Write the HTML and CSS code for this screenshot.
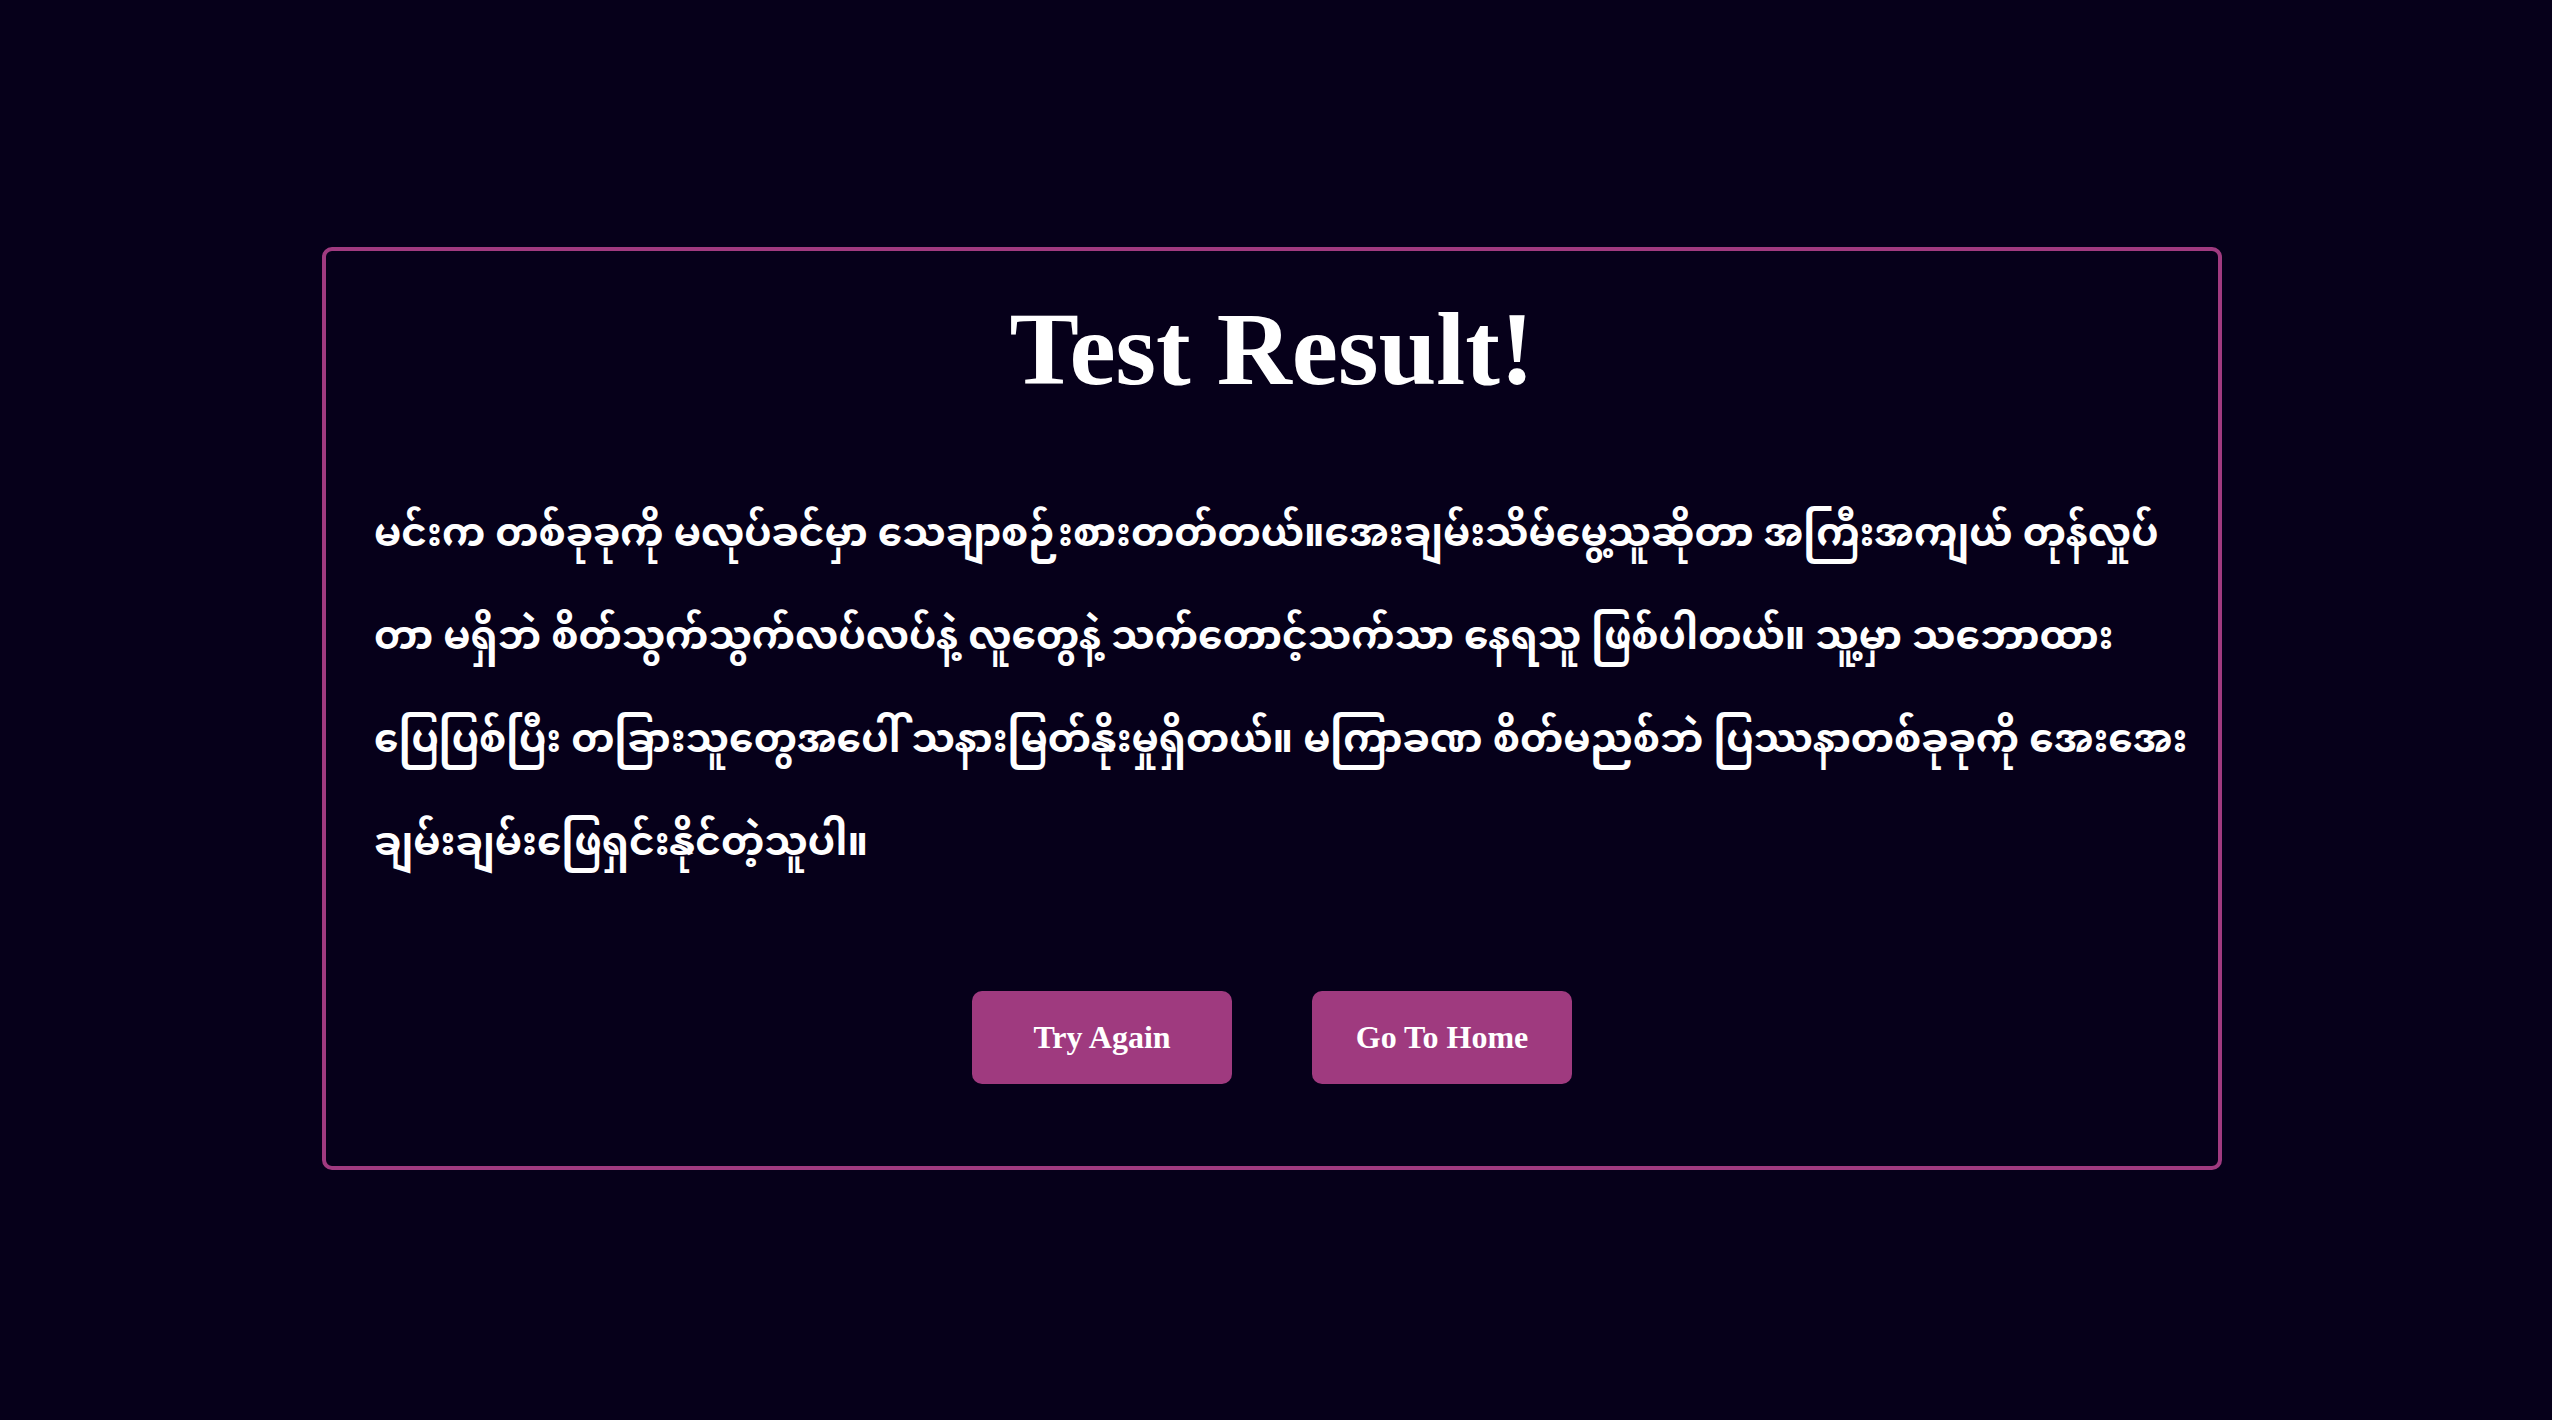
FILE: index.html
```html
<!DOCTYPE html>
<html lang="my">
<head>
<meta charset="utf-8">
<title>Test Result</title>
<link rel="stylesheet" href="styles.css">
</head>
<body>
<main class="page">
  <section class="card">
    <h1 class="title">Test Result!</h1>
    <p class="result">မင်းက တစ်ခုခုကို မလုပ်ခင်မှာ သေချာစဉ်းစားတတ်တယ်။အေးချမ်းသိမ်မွေ့သူဆိုတာ အကြီးအကျယ် တုန်လှုပ်<br>တာ မရှိဘဲ စိတ်သွက်သွက်လပ်လပ်နဲ့ လူတွေနဲ့ သက်တောင့်သက်သာ နေရသူ ဖြစ်ပါတယ်။ သူ့မှာ သဘောထား<br>ပြေပြစ်ပြီး တခြားသူတွေအပေါ် သနားမြတ်နိုးမှုရှိတယ်။ မကြာခဏ စိတ်မညစ်ဘဲ ပြဿနာတစ်ခုခုကို အေးအေး<br>ချမ်းချမ်းဖြေရှင်းနိုင်တဲ့သူပါ။</p>
    <div class="actions">
      <button class="btn" type="button">Try Again</button>
      <button class="btn" type="button">Go To Home</button>
    </div>
  </section>
</main>
</body>
</html>
```
FILE: styles.css
```css
html, body {
  margin: 0;
  padding: 0;
  background: #06001a;
  height: 100%;
}
body {
  color: #ffffff;
  font-family: "Liberation Serif", "Times New Roman", serif;
}
.page {
  min-height: 100vh;
  display: flex;
  align-items: center;
  justify-content: center;
  padding-right: 8px;
  padding-bottom: 3px;
  box-sizing: border-box;
}
.card {
  width: 1900px;
  box-sizing: border-box;
  border: 4px solid #a03a80;
  border-radius: 10px;
  padding: 36px 48px 82px 48px;
}
.title {
  margin: 0;
  text-align: center;
  font-size: 104px;
  font-weight: 700;
  line-height: 1.2;
}
.result {
  margin: 74px 0 0 0;
  font-family: "Noto Sans Myanmar", "Noto Sans", sans-serif;
  font-size: 39px;
  line-height: 103px;
  font-weight: 700;
  white-space: nowrap;
}
.actions {
  display: flex;
  justify-content: center;
  gap: 80px;
  margin-top: 93px;
}
.btn {
  width: 260px;
  height: 93px;
  border: none;
  border-radius: 10px;
  background: #9f3a7f;
  color: #ffffff;
  font-family: "Liberation Serif", "Times New Roman", serif;
  font-weight: 700;
  font-size: 32px;
  cursor: pointer;
}
```
